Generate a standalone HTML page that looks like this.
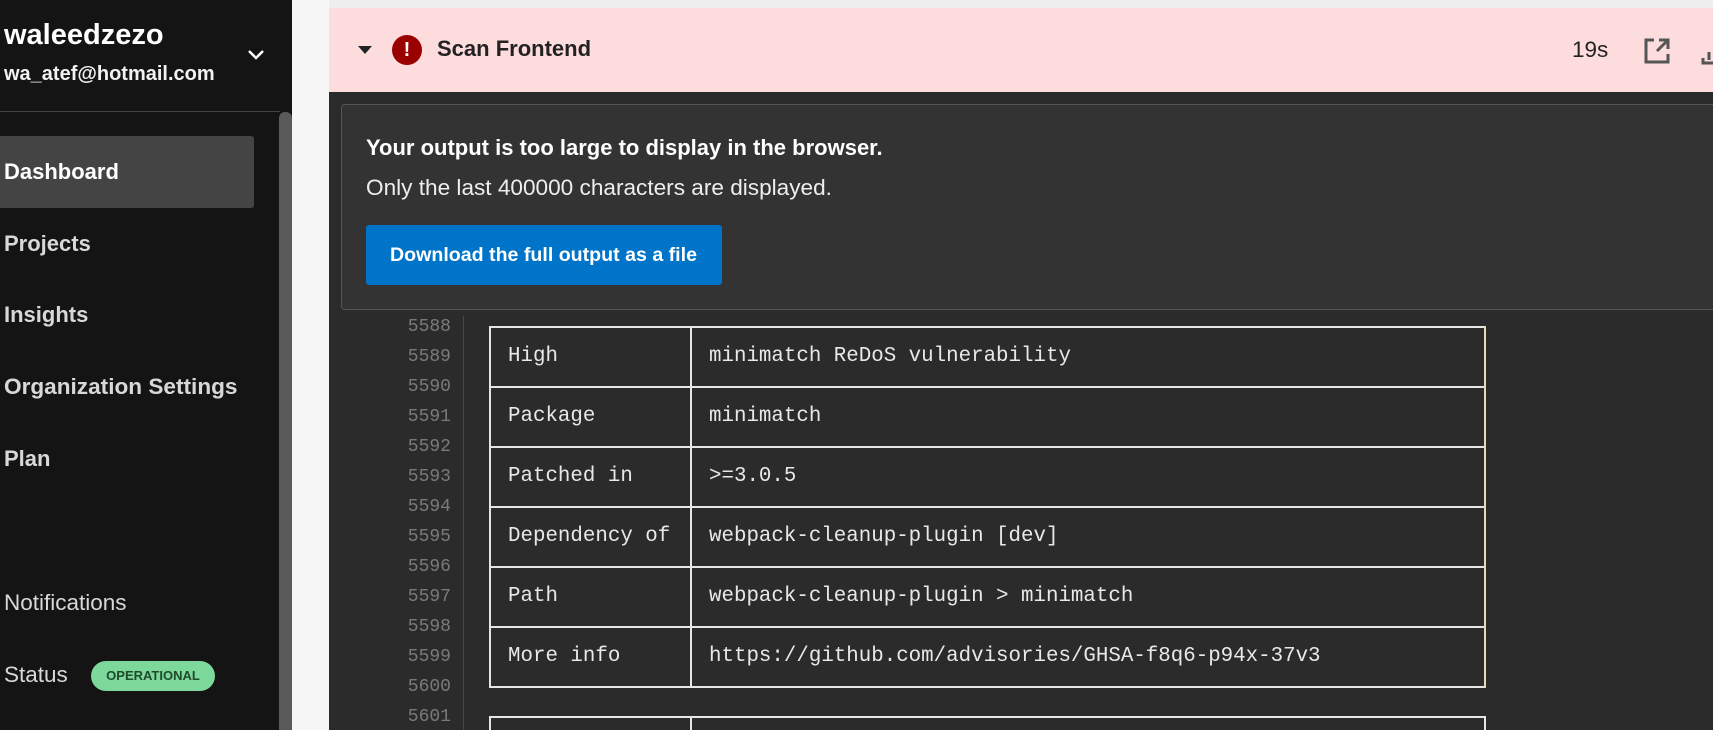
<!DOCTYPE html>
<html><head><meta charset="utf-8"><style>
*{margin:0;padding:0;box-sizing:border-box}
html,body{width:1713px;height:730px;overflow:hidden}
body{background:#f6f6f6;font-family:"Liberation Sans",Arial,sans-serif;position:relative}
.a{position:absolute}
.side{left:0;top:0;width:292px;height:730px;background:#141414}
.nav{left:4px;font-size:22px;font-weight:bold;color:#d8d8d8;line-height:26px}
.mono{font-family:"Liberation Mono","Courier New",monospace}
.ln{width:140px;left:311px;text-align:right;font-size:18px;color:#7a7a7a;line-height:30px;height:30px}
.tx{font-size:20.8px;color:#e8e8e8;line-height:30px;height:30px;white-space:pre}
.h{height:2px;background:#e6e6e6;left:489px;width:997px}
.v{width:2px;background:#e6e6e6}
</style></head><body>
<div class="a side"></div>
<div class="a" style="left:4px;top:19px;font-size:29px;font-weight:bold;color:#fff">waleedzezo</div>
<div class="a" style="left:4px;top:63px;font-size:20px;font-weight:bold;color:#f2f2f2">wa_atef@hotmail.com</div>
<svg class="a" style="left:246px;top:48px" width="20" height="14" viewBox="0 0 20 14"><path d="M3 3l7 7 7-7" stroke="#fff" stroke-width="2.5" fill="none"/></svg>
<div class="a" style="left:0;top:111px;width:280px;height:1px;background:#444"></div>
<div class="a" style="left:279px;top:112px;width:13px;height:618px;background:#5a5a5a;border-radius:6px 6px 0 0"></div>
<div class="a" style="left:0;top:136px;width:254px;height:72px;background:#444;border-radius:0 3px 3px 0"></div>
<div class="a nav" style="top:159px;color:#fff">Dashboard</div>
<div class="a nav" style="top:231px">Projects</div>
<div class="a nav" style="top:302px">Insights</div>
<div class="a nav" style="top:374px;font-size:22.6px">Organization Settings</div>
<div class="a nav" style="top:446px">Plan</div>
<div class="a nav" style="top:590px;font-weight:normal;font-size:22.5px">Notifications</div>
<div class="a nav" style="top:662px;font-weight:normal;font-size:22.5px">Status</div>
<div class="a" style="left:91px;top:661px;width:124px;height:30px;border-radius:15px;background:#7dd89b;color:#1f4a2c;font-size:13px;font-weight:bold;text-align:center;line-height:30px">OPERATIONAL</div>

<div class="a" style="left:329px;top:0;width:1384px;height:8px;background:#eeeeee"></div>
<div class="a" style="left:329px;top:8px;width:1384px;height:84px;background:#fddcdd"></div>
<svg class="a" style="left:358px;top:46px" width="14" height="9"><path d="M0 0h14L7 8z" fill="#222"/></svg>
<div class="a" style="left:392px;top:35px;width:30px;height:30px;border-radius:50%;background:#9b0000;color:#fff;font-weight:bold;font-size:20px;text-align:center;line-height:30px">!</div>
<div class="a" style="left:437px;top:36px;font-size:22px;font-weight:bold;color:#222">Scan Frontend</div>
<div class="a" style="left:1572px;top:37px;font-size:22.5px;color:#222">19s</div>
<svg class="a" style="left:1643px;top:37px" width="28" height="28" viewBox="0 0 28 28"><path d="M11 3H3v22h22v-8" stroke="#555" stroke-width="3" fill="none"/><path d="M14 14L24 4M16 3h9v9" stroke="#555" stroke-width="3" fill="none"/></svg>
<svg class="a" style="left:1701px;top:40px" width="12" height="26"><path d="M2 18v5h10" stroke="#555" stroke-width="3" fill="none"/><path d="M8 12v8" stroke="#555" stroke-width="3"/></svg>

<div class="a" style="left:329px;top:92px;width:1384px;height:638px;background:#2b2b2b"></div>
<div class="a" style="left:341px;top:104px;width:1372px;height:206px;background:#333;border:1px solid #555;border-right:none;border-radius:4px 0 0 4px"></div>
<div class="a" style="left:366px;top:135px;font-size:22px;font-weight:bold;color:#fff">Your output is too large to display in the browser.</div>
<div class="a" style="left:366px;top:175px;font-size:22.6px;color:#eee">Only the last 400000 characters are displayed.</div>
<div class="a" style="left:366px;top:225px;width:356px;height:60px;background:#0074c8;border-radius:3px;color:#fff;font-size:19.6px;font-weight:bold;line-height:60px;padding-left:24px;white-space:nowrap">Download the full output as a file</div>

<div class="a" style="left:463px;top:316px;width:1px;height:414px;background:#474747"></div>
<div class="a" style="left:0;top:316px;width:1713px;height:414px;overflow:hidden">
<div style="position:absolute;left:0;top:-316px;width:1713px;height:730px">
<div class="a mono ln" style="top:312px">5588</div>
<div class="a mono ln" style="top:342px">5589</div>
<div class="a mono ln" style="top:372px">5590</div>
<div class="a mono ln" style="top:402px">5591</div>
<div class="a mono ln" style="top:432px">5592</div>
<div class="a mono ln" style="top:462px">5593</div>
<div class="a mono ln" style="top:492px">5594</div>
<div class="a mono ln" style="top:522px">5595</div>
<div class="a mono ln" style="top:552px">5596</div>
<div class="a mono ln" style="top:582px">5597</div>
<div class="a mono ln" style="top:612px">5598</div>
<div class="a mono ln" style="top:642px">5599</div>
<div class="a mono ln" style="top:672px">5600</div>
<div class="a mono ln" style="top:702px">5601</div>

<div class="a h" style="top:326px"></div>
<div class="a h" style="top:386px"></div>
<div class="a h" style="top:446px"></div>
<div class="a h" style="top:506px"></div>
<div class="a h" style="top:566px"></div>
<div class="a h" style="top:626px"></div>
<div class="a h" style="top:686px"></div>
<div class="a h" style="top:716px"></div>
<div class="a v" style="left:489px;top:326px;height:362px"></div>
<div class="a v" style="left:690px;top:326px;height:362px"></div>
<div class="a v" style="left:1484px;top:326px;height:362px;background:#e8d9b8"></div>
<div class="a v" style="left:489px;top:716px;height:14px"></div>
<div class="a v" style="left:690px;top:716px;height:14px"></div>
<div class="a v" style="left:1484px;top:716px;height:14px"></div>

<div class="a mono tx" style="left:508px;top:342px">High</div>
<div class="a mono tx" style="left:709px;top:342px">minimatch ReDoS vulnerability</div>
<div class="a mono tx" style="left:508px;top:402px">Package</div>
<div class="a mono tx" style="left:709px;top:402px">minimatch</div>
<div class="a mono tx" style="left:508px;top:462px">Patched in</div>
<div class="a mono tx" style="left:709px;top:462px">&gt;=3.0.5</div>
<div class="a mono tx" style="left:508px;top:522px">Dependency of</div>
<div class="a mono tx" style="left:709px;top:522px">webpack-cleanup-plugin [dev]</div>
<div class="a mono tx" style="left:508px;top:582px">Path</div>
<div class="a mono tx" style="left:709px;top:582px">webpack-cleanup-plugin &gt; minimatch</div>
<div class="a mono tx" style="left:508px;top:642px">More info</div>
<div class="a mono tx" style="left:709px;top:642px">https://github.com/advisories/GHSA-f8q6-p94x-37v3</div>
</div></div>
</body></html>
